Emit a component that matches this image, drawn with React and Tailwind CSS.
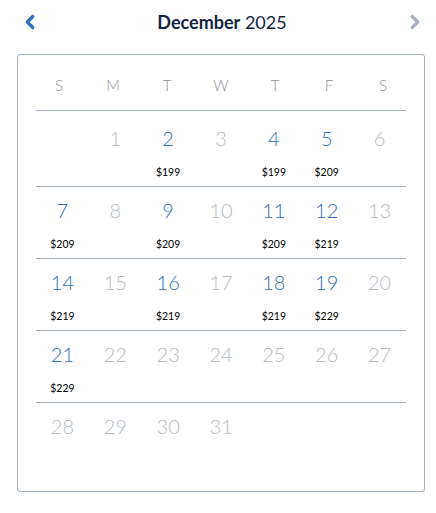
import { ChevronLeft, ChevronRight } from 'lucide-react'

const prices = { 2: 199, 4: 199, 5: 209, 7: 209, 9: 209, 11: 209, 12: 219, 14: 219, 16: 219, 18: 219, 19: 229, 21: 229 }
const days = ['S', 'M', 'T', 'W', 'T', 'F', 'S']

// December 2025 starts on a Monday
const cells = [null, ...Array.from({ length: 31 }, (_, i) => i + 1)]
const weeks = []
for (let i = 0; i < cells.length; i += 7) weeks.push(cells.slice(i, i + 7))

export default function App() {
  return (
    <div className="w-[436px] h-[513px] bg-white font-['Lato',sans-serif]">
      <div className="flex items-center justify-between h-[44px] pl-[19px] pr-[10px]">
        <ChevronLeft className="w-[22px] h-[22px] text-[#2e6fb7]" strokeWidth={3.5} />
        <h1 className="text-[18px] text-[#14253f] -ml-[1px]">
          <span className="font-bold">December</span> 2025
        </h1>
        <ChevronRight className="w-[22px] h-[22px] text-[#a5b1c2]" strokeWidth={3.5} />
      </div>

      <div className="ml-[17px] mt-[10px] w-[408px] h-[438px] border border-[#a3b0be] rounded-[3px] px-[18px]">
        <div className="border-b border-[#a3b0be] h-[56px] flex items-end pb-[14px]">
          <div className="grid grid-cols-7 w-[378px] shrink-0 -ml-[4px] text-[15px] text-[#8f9199] font-light">
            {days.map((d, i) => (
              <div key={i} className="text-center">{d}</div>
            ))}
          </div>
        </div>

        {weeks.map((w, wi) => (
          <div key={wi} className={`grid grid-cols-7 ${wi === 0 ? 'h-[76px] pt-[4px]' : 'h-[72px]'} ${wi < weeks.length - 1 ? 'border-b border-[#a3b0be]' : ''}`}>
            {Array.from({ length: 7 }, (_, di) => {
              const d = w[di]
              const price = d && prices[d]
              return (
                <div key={di} className="flex flex-col items-center pt-[11px]">
                  {d && (
                    <span className={`text-[20px] leading-[24px] font-light ${price ? 'text-[#2e6fb7]' : 'text-[#b3bcc6]'}`}>{d}</span>
                  )}
                  {price && (
                    <span className="mt-[16px] text-[10.5px] leading-[12px] text-black">${price}</span>
                  )}
                </div>
              )
            })}
          </div>
        ))}
      </div>
    </div>
  )
}
